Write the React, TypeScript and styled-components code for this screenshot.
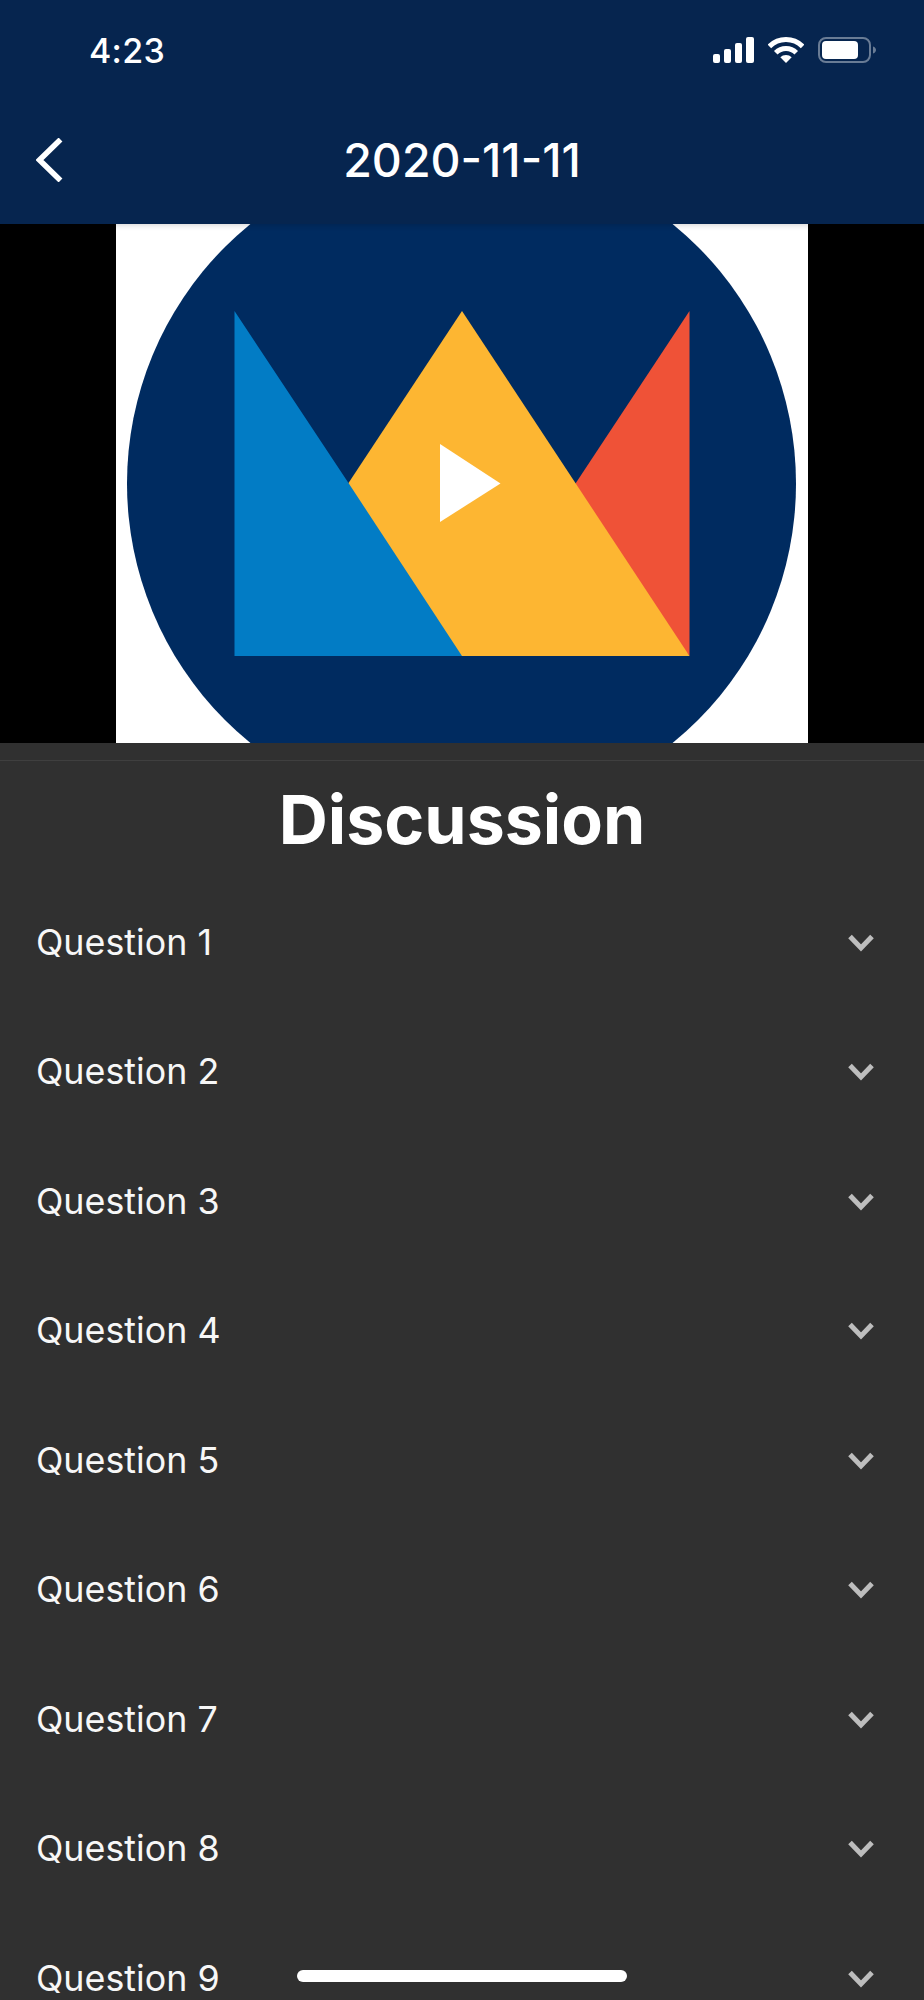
import React from "react";
import styled, { createGlobalStyle } from "styled-components";

const GlobalStyle = createGlobalStyle`
  html, body {
    margin: 0;
    padding: 0;
    background: #303030;
  }
  * {
    box-sizing: border-box;
  }
`;

const Screen = styled.div`
  position: relative;
  width: 924px;
  height: 2000px;
  overflow: hidden;
  background: #303030;
  color: #fff;
  font-family: Inter, "Liberation Sans", sans-serif;
`;

const Header = styled.header`
  position: relative;
  z-index: 1;
  height: 224px;
  background: #06254f;
  box-shadow: 0 1px 6px rgba(0, 0, 0, 0.18);
`;

const StatusBar = styled.div`
  display: flex;
  align-items: center;
  justify-content: space-between;
  height: 100px;
  padding: 0 48px 0 89px;
`;

const Time = styled.span`
  font-size: 34px;
  font-weight: 500;
  letter-spacing: 0.3px;
`;

const StatusIcons = styled.div`
  display: flex;
  align-items: center;
  gap: 14px;
`;

const TitleBar = styled.div`
  display: grid;
  grid-template-columns: 100px 1fr 100px;
  align-items: center;
  height: 124px;
  padding-bottom: 4px;
`;

const BackButton = styled.button`
  display: flex;
  align-items: center;
  width: 100px;
  padding: 0 0 0 36px;
  border: 0;
  background: none;
`;

const Title = styled.h1`
  margin: 0;
  font-size: 46.5px;
  font-weight: 500;
  line-height: 1;
  text-align: center;
`;

const Video = styled.div`
  display: flex;
  justify-content: center;
  height: 519px;
  background: #000;
`;

const Thumbnail = styled.svg`
  display: block;
  width: 692px;
  height: 519px;
`;

const Discussion = styled.section`
  margin-top: 17px;
  border-top: 1px solid #3f3f3f;
`;

const Heading = styled.h2`
  margin: 0;
  height: 117px;
  padding-top: 18px;
  font-size: 68px;
  font-weight: 700;
  line-height: 80px;
  text-align: center;
`;

const Row = styled.div`
  display: flex;
  align-items: center;
  justify-content: space-between;
  height: 129.5px;
  padding: 0 50px 2px 36px;
`;

const Question = styled.span`
  font-size: 35.8px;
  font-weight: 400;
  color: #f7f7f7;
`;

const ChevronIcon = styled.svg`
  margin-top: 2px;
`;

const HomeIndicator = styled.div`
  position: absolute;
  left: 297px;
  bottom: 18px;
  width: 330px;
  height: 12px;
  border-radius: 6px;
  background: #fff;
`;

const Chevron = () => (
  <ChevronIcon width="26" height="18" viewBox="0 0 26 18" fill="none">
    <path d="M2 2.5L13 14L24 2.5" stroke="#bdbdbd" strokeWidth="5" />
  </ChevronIcon>
);

const SignalIcon = () => (
  <svg width="41" height="26" viewBox="0 0 41 26" fill="#fff">
    <rect x="0" y="17" width="7" height="9" rx="2" />
    <rect x="11" y="12" width="7" height="14" rx="2" />
    <rect x="22" y="6" width="7" height="20" rx="2" />
    <rect x="33" y="0" width="8" height="26" rx="2" />
  </svg>
);

const WifiIcon = () => (
  <svg width="36" height="26" viewBox="0 0 36 26" fill="none">
    <path d="M1.4 9.4A23.5 23.5 0 0 1 34.6 9.4" stroke="#fff" strokeWidth="5" />
    <path d="M7.75 15.75A14.5 14.5 0 0 1 28.25 15.75" stroke="#fff" strokeWidth="5" />
    <path d="M18 26L12.3 20.3A8 8 0 0 1 23.7 20.3Z" fill="#fff" />
  </svg>
);

const BatteryIcon = () => (
  <svg width="58" height="26" viewBox="0 0 58 26" fill="none">
    <rect x="1" y="1" width="51" height="24" rx="7" stroke="#fff" strokeOpacity="0.4" strokeWidth="2" />
    <rect x="4" y="4" width="36" height="18" rx="4" fill="#fff" />
    <path d="M55 9.5C57 10.2 58 11.4 58 13C58 14.6 57 15.8 55 16.5Z" fill="#fff" fillOpacity="0.4" />
  </svg>
);

const questions = [1, 2, 3, 4, 5, 6, 7, 8, 9];

export default function App() {
  return (
    <Screen>
      <GlobalStyle />
      <Header>
        <StatusBar>
          <Time>4:23</Time>
          <StatusIcons>
            <SignalIcon />
            <WifiIcon />
            <BatteryIcon />
          </StatusIcons>
        </StatusBar>
        <TitleBar>
          <BackButton aria-label="Back">
            <svg width="27" height="44" viewBox="0 0 27 44" fill="none">
              <path d="M24.5 1.5L3.5 22L24.5 42.5" stroke="#fff" strokeWidth="5.5" />
            </svg>
          </BackButton>
          <Title>2020-11-11</Title>
        </TitleBar>
      </Header>
      <Video>
        <Thumbnail viewBox="116 224 692 519">
          <rect x="116" y="224" width="692" height="519" fill="#fff" />
          <circle cx="461.5" cy="483.5" r="334.5" fill="#002b60" />
          <polygon points="234.5,311 348.5,483 400,520 470,656 234.5,656" fill="#027cc5" />
          <polygon points="689.5,311 689.5,656 560,507" fill="#ef5237" />
          <polygon points="462,311 689.5,656 462,656 348.5,483" fill="#fdb632" />
          <polygon points="440,444 500.5,483.5 440,522" fill="#fff" />
        </Thumbnail>
      </Video>
      <Discussion>
        <Heading>Discussion</Heading>
        {questions.map((n) => (
          <Row key={n}>
            <Question>Question {n}</Question>
            <Chevron />
          </Row>
        ))}
      </Discussion>
      <HomeIndicator />
    </Screen>
  );
}
